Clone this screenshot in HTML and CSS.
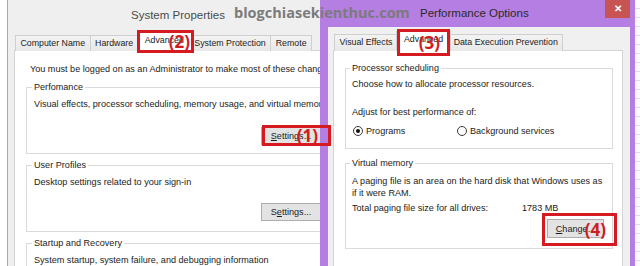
FILE: index.html
```html
<!DOCTYPE html>
<html lang="en">
<head>
  <meta charset="UTF-8" />
  <title>System Properties - Performance Options</title>
  <link rel="stylesheet" href="styles.css">
</head>
<body>
  <div class="desk">
    <div class="sheet"></div>

    <section class="window sysprops">
      <header class="titlebar">
        <span class="title">System Properties</span>
      </header>
      <div class="client">
        <ul class="tabs">
          <li>Computer Name</li>
          <li>Hardware</li>
          <li class="active">Advanced</li>
          <li>System Protection</li>
          <li>Remote</li>
        </ul>
        <div class="tabpanel">
          <p class="note">You must be logged on as an Administrator to make most of these changes.</p>

          <div class="group">
            <div class="group-title">Perfomance</div>
            <p>Visual effects, processor scheduling, memory usage, and virtual memory</p>
            <div class="actions act-perf"><button><u>S</u>ettings...</button></div>
          </div>

          <div class="group">
            <div class="group-title">User Profiles</div>
            <p>Desktop settings related to your sign-in</p>
            <div class="actions act-prof"><button>S<u>e</u>ttings...</button></div>
          </div>

          <div class="group">
            <div class="group-title">Startup and Recovery</div>
            <p>System startup, system failure, and debugging information</p>
          </div>
        </div>
      </div>
    </section>

    <section class="window perfopts">
      <header class="titlebar">
        <span class="title">Performance Options</span>
        <span class="close">&#x2715;</span>
      </header>
      <div class="client">
        <ul class="tabs">
          <li>Visual Effects</li>
          <li class="active">Advanced</li>
          <li>Data Execution Prevention</li>
        </ul>
        <div class="tabpanel">
          <div class="group">
            <div class="group-title">Processor scheduling</div>
            <p>Choose how to allocate processor resources.</p>
            <p class="adjust">Adjust for best performance of:</p>
            <div class="radios">
              <label class="radio checked"><span class="dot"></span>Programs</label>
              <label class="radio"><span class="dot"></span>Background services</label>
            </div>
          </div>

          <div class="group vm">
            <div class="group-title">Virtual memory</div>
            <p>A paging file is an area on the hard disk that Windows uses as<br>if it were RAM.</p>
            <div class="size-row">
              <span class="size-label">Total paging file size for all drives:</span>
              <span>1783 MB</span>
            </div>
            <div class="actions act-vm"><button><u>C</u>hange...</button></div>
          </div>
        </div>
      </div>
    </section>

    <div class="watermark">blogchiasekienthuc.com</div>

    <div class="mark mark-1"><span>(1)</span></div>
    <div class="mark mark-2"><span>(2)</span></div>
    <div class="mark mark-3"><span>(3)</span></div>
    <div class="mark mark-4"><span>(4)</span></div>
  </div>
</body>
</html>
```

FILE: styles.css
```css
* {
  box-sizing: border-box;
}

body {
  margin: 0;
  font-family: 'Liberation Sans', Arial, sans-serif;
  font-size: 9.1px;
  color: #1b1b1b;
  background: #fff;
}

.desk {
  position: relative;
  width: 640px;
  height: 266px;
  overflow: hidden;
  background: #fff;
}

/* spreadsheet peeking out on the right */
.sheet {
  position: absolute;
  left: 625px;
  top: 0;
  width: 15px;
  height: 266px;
  background: repeating-linear-gradient(to bottom, #fbfbfd 0 8px, #dcdce8 8px 9px);
}

.window {
  position: absolute;
  top: 0;
  height: 290px;
}

.titlebar {
  display: flex;
  align-items: flex-start;
}

.title {
  font-size: 11.5px;
}

/* ---- System Properties (inactive) ---- */
.sysprops {
  left: 7px;
  width: 333px;
  background: #efefef;
  border-left: 1px solid #a9a9a9;
}

.sysprops .titlebar {
  height: 30px;
  padding-left: 123px;
}

.sysprops .title {
  line-height: 30px;
  color: #4b4b4b;
}

.sysprops .client {
  padding: 5px 0 0 6px;
}

/* ---- Performance Options (active, purple frame) ---- */
.perfopts {
  left: 320px;
  width: 315px;
  background: #b47ee2;
  padding: 0 5px 0 8px;
  z-index: 2;
}

.perfopts .titlebar {
  height: 27px;
  padding-left: 92px;
}

.perfopts .title {
  line-height: 27px;
  color: #2a2a2a;
}

.close {
  margin-left: auto;
  width: 25px;
  height: 18px;
  background: #c75353;
  color: #fff;
  font-size: 10px;
  font-weight: bold;
  line-height: 18px;
  text-align: center;
}

.perfopts .client {
  background: #f0f0f0;
  height: 263px;
  padding: 7px 7px 0 5px;
}

/* ---- tabs ---- */
.tabs {
  display: flex;
  align-items: flex-end;
  list-style: none;
  margin: 0 0 -1px 1px;
  padding: 0;
  height: 17px;
  font-size: 8.8px;
}

.sysprops .tabs {
  height: 16px;
}

.tabs li {
  height: 100%;
  padding: 0 4.5px;
  line-height: 15px;
  border: 1px solid #cfcfcf;
  border-bottom: none;
  background: linear-gradient(#f3f3f3, #e8e8e8);
  white-space: nowrap;
}

.tabs li + li {
  margin-left: -1px;
}

.tabs li.active {
  position: relative;
  z-index: 1;
  height: 19px;
  margin: 0 -2px;
  padding: 0 7px;
  background: #fff;
  line-height: 15px;
}

.perfopts .tabs li.active {
  height: 20px;
}

.tabpanel {
  background: #fff;
  border: 1px solid #d4d4d4;
  height: 240px;
}

.sysprops .tabpanel {
  padding: 12px 8px 0 11px;
}

.perfopts .tabpanel {
  padding: 0 9px 0 11px;
}

p {
  margin: 0;
  line-height: 12px;
  white-space: nowrap;
}

.note {
  margin-left: 4px;
}

/* ---- group boxes ---- */
.group {
  border: 1px solid #dadada;
  padding: 0 9px 10px 7px;
}

.group-title {
  width: fit-content;
  margin: -7px 0 0 -2px;
  padding: 0 2px;
  line-height: 12px;
  background: #fff;
}

.group p {
  margin-top: 5px;
}

.sysprops .group {
  margin-top: 11px;
}

.sysprops .group:first-of-type {
  margin-top: 12px;
  padding-bottom: 8px;
}

.actions {
  display: flex;
  justify-content: flex-end;
}

.act-perf {
  margin-top: 17px;
}

.act-prof {
  margin-top: 15px;
}

button {
  font: inherit;
  color: #1b1b1b;
  height: 18px;
  width: 60px;
  padding: 0;
  background: #e3e3e3;
  border: 1px solid #adadad;
  border-radius: 0;
}

/* right dialog groups */
.perfopts .group {
  padding: 0 8px 11px 6px;
  margin-top: 17px;
}

.perfopts .group p {
  margin-top: 4px;
}

.perfopts .group p.adjust {
  margin-top: 16px;
}

.radios {
  display: flex;
  margin-top: 7px;
  padding-left: 1px;
  line-height: 12px;
}

.radio {
  display: flex;
  align-items: center;
  gap: 3px;
}

.radio:first-child {
  width: 104px;
}

.dot {
  width: 10px;
  height: 10px;
  border: 1px solid #3a3a3a;
  border-radius: 50%;
  background: #fff;
  display: flex;
  align-items: center;
  justify-content: center;
}

.radio.checked .dot::after {
  content: "";
  width: 4px;
  height: 4px;
  border-radius: 50%;
  background: #111;
}

.perfopts .group.vm {
  margin-top: 14px;
  padding-bottom: 10px;
}

.perfopts .group.vm p {
  margin-top: 6px;
}

.size-row {
  display: flex;
  margin-top: 3px;
  line-height: 12px;
}

.size-label {
  width: 170px;
}

.act-vm {
  margin-top: 5px;
}

.act-vm button {
  width: 57px;
  height: 19px;
}

/* ---- watermark + annotations ---- */
.watermark {
  position: absolute;
  left: 234px;
  top: 3px;
  z-index: 5;
  font-family: 'Open Sans', sans-serif;
  font-weight: 700;
  font-size: 14.5px;
  line-height: 20px;
  color: #7b7b7b;
}

.mark {
  position: absolute;
  z-index: 6;
  display: flex;
  align-items: center;
  justify-content: flex-end;
  border: 3px solid #d51a21;
  font-family: 'Open Sans', sans-serif;
  font-weight: 700;
  font-size: 17px;
  line-height: 1;
  color: #d01b22;
}

.mark-1 {
  left: 262px;
  top: 125px;
  width: 69px;
  height: 21px;
  padding-right: 10px;
}

.mark-2 {
  left: 137px;
  top: 30px;
  width: 57px;
  height: 23px;
  padding-right: 1px;
}

.mark-3 {
  left: 397px;
  top: 29px;
  width: 53px;
  height: 27px;
  padding-right: 7px;
}

.mark-4 {
  left: 542px;
  top: 213px;
  width: 75px;
  height: 33px;
  padding-right: 8px;
}
```
